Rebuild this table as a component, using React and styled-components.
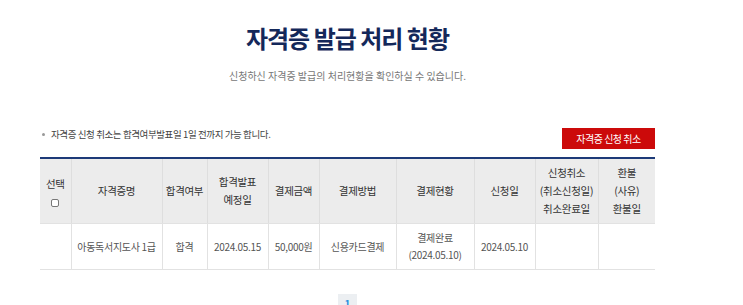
import React from 'react';
import styled, { createGlobalStyle } from 'styled-components';

const GlobalStyle = createGlobalStyle`
    * { box-sizing: border-box; }
    body {
        margin: 0;
        background: #fff;
        font-family: 'Noto Sans CJK KR', 'Noto Sans', sans-serif;
        color: #333;
    }
`;

const Page = styled.div`
    width: 615px;
    margin-left: 40px;
    padding-top: 22px;
`;

const Title = styled.h1`
    margin: 0;
    text-align: center;
    font-size: 24px;
    line-height: 32px;
    font-weight: 700;
    letter-spacing: -1px;
    color: #14285a;
`;

const Lead = styled.p`
    margin: 14px 0 0;
    text-align: center;
    font-size: 10px;
    line-height: 16px;
    letter-spacing: 0;
    color: #777;
`;

const Toolbar = styled.div`
    margin-top: 43px;
    display: flex;
    justify-content: space-between;
    align-items: flex-start;
`;

const Note = styled.p`
    margin: 0;
    display: flex;
    align-items: center;
    gap: 4px;
    font-size: 9.5px;
    line-height: 14px;
    letter-spacing: -0.4px;
    color: #444;
`;

const Dot = styled.span`
    width: 3px;
    height: 3px;
    border-radius: 50%;
    background: #999;
    margin: 0 2px;
`;

const CancelButton = styled.button`
    width: 93px;
    height: 21px;
    border: 0;
    margin-top: 1px;
    padding: 0;
    background: #cc0a0a;
    color: #fff;
    font-family: inherit;
    font-size: 10px;
    letter-spacing: -0.5px;
    cursor: pointer;
`;

const Table = styled.table`
    margin-top: 8px;
    width: 615px;
    table-layout: fixed;
    border-collapse: collapse;
    border-top: 2px solid #1d3a78;
`;

const Th = styled.th`
    height: 65px;
    padding: 0;
    background: #ececec;
    border-left: 1px solid #dedede;
    border-bottom: 1px solid #e2e2e2;
    font-size: 10.5px;
    font-weight: 400;
    line-height: 18px;
    letter-spacing: -0.3px;
    color: #333;
    &:first-child { border-left: 0; }
`;

const Td = styled.td`
    height: 46px;
    padding: 0;
    text-align: center;
    border-left: 1px solid #e2e2e2;
    border-bottom: 1px solid #e2e2e2;
    font-size: 10px;
    line-height: 17px;
    letter-spacing: -0.3px;
    color: #555;
    &:first-child { border-left: 0; }
`;

const Check = styled.input`
    appearance: none;
    display: block;
    margin: 6px auto 0;
    width: 8px;
    height: 8px;
    border: 1px solid #777;
    border-radius: 2px;
    background: #fff;
`;

const Pager = styled.div`
    margin-top: 24px;
    display: flex;
    justify-content: center;
`;

const PageNum = styled.span`
    width: 19px;
    height: 19px;
    display: flex;
    align-items: center;
    justify-content: center;
    background: ${p => (p.$active ? '#eceff2' : 'transparent')};
    color: #2a8fe0;
    font-size: 10px;
    font-weight: 700;
`;

const widths = [31, 91, 45, 61, 51, 77, 78, 61, 63, 57];

const headers = [
    null,
    ['자격증명'],
    ['합격여부'],
    ['합격발표', '예정일'],
    ['결제금액'],
    ['결제방법'],
    ['결제현황'],
    ['신청일'],
    ['신청취소', '(취소신청일)', '취소완료일'],
    ['환불', '(사유)', '환불일'],
];

const row = [
    [],
    ['아동독서지도사 1급'],
    ['합격'],
    ['2024.05.15'],
    ['50,000원'],
    ['신용카드결제'],
    ['결제완료', '(2024.05.10)'],
    ['2024.05.10'],
    [],
    [],
];

const Lines = ({ items }) =>
    items.map((t, i) => (
        <React.Fragment key={i}>
            {i > 0 && <br />}
            {t}
        </React.Fragment>
    ));

const App = () => {
    return (
        <Page>
            <GlobalStyle />
            <Title>자격증 발급 처리 현황</Title>
            <Lead>신청하신 자격증 발급의 처리현황을 확인하실 수 있습니다.</Lead>
            <Toolbar>
                <Note>
                    <Dot />
                    자격증 신청 취소는 합격여부발표일 1일 전까지 가능 합니다.
                </Note>
                <CancelButton>자격증 신청 취소</CancelButton>
            </Toolbar>
            <Table>
                <colgroup>
                    {widths.map((w, i) => <col key={i} style={{ width: w }} />)}
                </colgroup>
                <thead>
                    <tr>
                        {headers.map((h, i) => (
                            <Th key={i}>
                                {h ? <Lines items={h} /> : (<>선택<Check type="checkbox" /></>)}
                            </Th>
                        ))}
                    </tr>
                </thead>
                <tbody>
                    <tr>
                        {row.map((c, i) => (
                            <Td key={i}><Lines items={c} /></Td>
                        ))}
                    </tr>
                </tbody>
            </Table>
            <Pager>
                <PageNum $active>1</PageNum>
            </Pager>
        </Page>
    );
};

export default App;
